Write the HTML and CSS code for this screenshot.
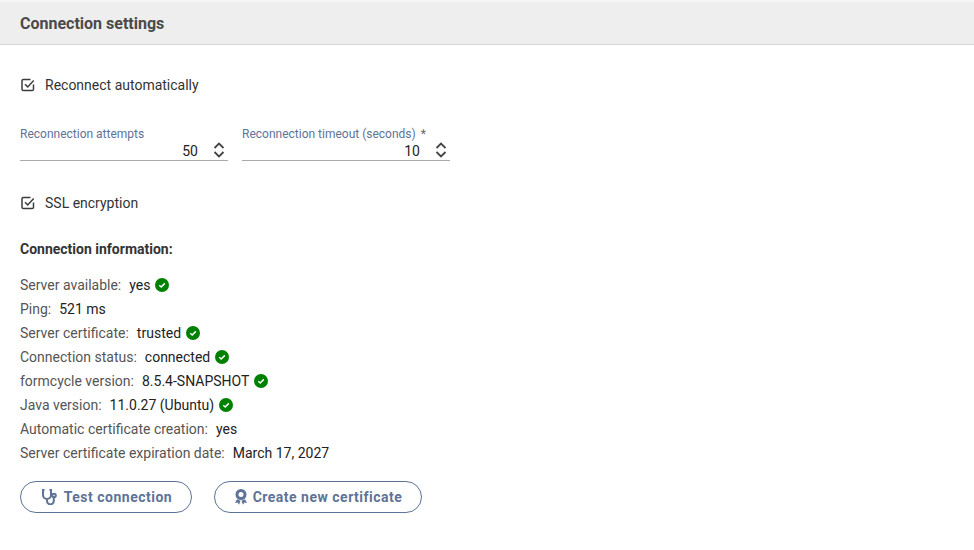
FILE: index.html
```html
<!DOCTYPE html>
<html lang="en">
<head>
<meta charset="UTF-8">
<title>Connection settings</title>
<link rel="stylesheet" href="styles.css">
</head>
<body>
<header class="panel-header">
    <h2>Connection settings</h2>
</header>

<main class="panel-body">
    <label class="check-row check-first">
        <svg class="check-icon" viewBox="0 0 14 14"><path d="M12.500 6.500V11.200a1.300 1.300 0 0 1-1.300 1.300H2.300a1.300 1.300 0 0 1-1.300-1.300V2.800a1.300 1.300 0 0 1 1.300-1.300H9.500"/><path d="M4 6.200l2.700 2.700 6-6.400"/></svg>
        <span>Reconnect automatically</span>
    </label>

    <div class="fields">
        <div class="field">
            <div class="field-label">Reconnection attempts</div>
            <div class="field-input">
                <span class="field-value">50</span>
                <svg class="spinner" viewBox="0 0 12 16"><path d="M1.500 6l4.500-4.500L10.500 6"/><path d="M1.500 10l4.500 4.500L10.500 10"/></svg>
            </div>
        </div>
        <div class="field">
            <div class="field-label">Reconnection timeout (seconds) <span class="req">*</span></div>
            <div class="field-input">
                <span class="field-value">10</span>
                <svg class="spinner" viewBox="0 0 12 16"><path d="M1.500 6l4.500-4.500L10.500 6"/><path d="M1.500 10l4.500 4.500L10.500 10"/></svg>
            </div>
        </div>
    </div>

    <label class="check-row check-ssl">
        <svg class="check-icon" viewBox="0 0 14 14"><path d="M12.500 6.500V11.200a1.300 1.300 0 0 1-1.300 1.300H2.300a1.300 1.300 0 0 1-1.300-1.300V2.800a1.300 1.300 0 0 1 1.300-1.300H9.500"/><path d="M4 6.200l2.700 2.700 6-6.400"/></svg>
        <span>SSL encryption</span>
    </label>

    <h3 class="info-title">Connection information:</h3>

    <ul class="info-list">
        <li><span class="info-key">Server available:</span><span>yes</span><svg class="ok" viewBox="0 0 14 14"><circle cx="7" cy="7" r="7"/><path d="M4.300 7.300l1.900 1.700L9.800 5.400"/></svg></li>
        <li><span class="info-key">Ping:</span><span>521 ms</span></li>
        <li><span class="info-key">Server certificate:</span><span>trusted</span><svg class="ok" viewBox="0 0 14 14"><circle cx="7" cy="7" r="7"/><path d="M4.300 7.300l1.900 1.700L9.800 5.400"/></svg></li>
        <li><span class="info-key">Connection status:</span><span>connected</span><svg class="ok" viewBox="0 0 14 14"><circle cx="7" cy="7" r="7"/><path d="M4.300 7.300l1.900 1.700L9.800 5.400"/></svg></li>
        <li><span class="info-key">formcycle version:</span><span>8.5.4-SNAPSHOT</span><svg class="ok" viewBox="0 0 14 14"><circle cx="7" cy="7" r="7"/><path d="M4.300 7.300l1.900 1.700L9.800 5.400"/></svg></li>
        <li><span class="info-key">Java version:</span><span>11.0.27 (Ubuntu)</span><svg class="ok" viewBox="0 0 14 14"><circle cx="7" cy="7" r="7"/><path d="M4.300 7.300l1.900 1.700L9.800 5.400"/></svg></li>
        <li><span class="info-key">Automatic certificate creation:</span><span>yes</span></li>
        <li><span class="info-key">Server certificate expiration date:</span><span>March 17, 2027</span></li>
    </ul>

    <div class="actions">
        <button class="btn btn-test">
            <svg class="icon-test" viewBox="0 0 18 16"><path d="M3.500 1H2V6a4 4 0 0 0 8 0V1H8.500"/><path d="M6 10.500V12a3.200 3.200 0 0 0 6.800 0V9"/><circle cx="13" cy="6.500" r="1.800"/></svg>
            Test connection
        </button>
        <button class="btn btn-cert">
            <svg class="icon-cert" viewBox="0 0 14 16"><circle cx="7" cy="5.500" r="4"/><path class="ribbon" d="M3 10.200L1 14l2.600-.5L5 15.800l1.500-4zM11 10.200L13 14l-2.600-.5L9 15.800l-1.500-4z"/></svg>
            Create new certificate
        </button>
    </div>
</main>
</body>
</html>
```

FILE: styles.css
```css
body {
    font-family: Roboto, 'Liberation Sans', sans-serif;
    font-size: 14px;
    margin: 0;
    padding: 0;
    background: #fff;
    color: #333;
}
.panel-header {
    height: 45px;
    box-sizing: border-box;
    background: #eee;
    border-top: 2px solid #f6f6f6;
    border-bottom: 1px solid #d6d6d6;
    padding: 0 20px;
    display: flex;
    align-items: center;
}
.panel-header h2 {
    margin: 0;
    font-size: 16px;
    font-weight: 700;
    color: #4a4a4a;
}
.panel-body {
    padding: 0 20px;
}
.check-row {
    display: flex;
    align-items: center;
    gap: 10px;
    height: 20px;
}
.check-first {
    margin-top: 30px;
}
.check-ssl {
    margin-top: 32px;
}
.check-icon {
    width: 14px;
    height: 14px;
    margin-left: 1px;
    fill: none;
    stroke: #3c3c3c;
    stroke-width: 1.500;
}
.fields {
    display: flex;
    gap: 14px;
    margin-top: 32px;
}
.field {
    width: 208px;
}
.field-label {
    font-size: 12px;
    line-height: 14px;
    color: #5e7397;
}
.req {
    color: #666;
    margin-left: 2px;
}
.field-input {
    display: flex;
    align-items: center;
    justify-content: flex-end;
    height: 19px;
    padding-right: 3px;
    border-bottom: 1px solid #aaa;
    color: #222;
}
.field-value {
    margin-right: 15px;
}
.spinner {
    width: 12px;
    height: 16px;
    margin-bottom: 2px;
    fill: none;
    stroke: #444;
    stroke-width: 1.800;
}
.info-title {
    margin: 26px 0 0;
    font-size: 14px;
    line-height: 20px;
    font-weight: 700;
    color: #333;
}
.info-list {
    list-style: none;
    margin: 14px 0 0;
    padding: 0;
}
.info-list li {
    display: flex;
    align-items: center;
    height: 24px;
    color: #222;
}
.info-key {
    color: #555;
    margin-right: 8px;
}
.ok {
    width: 14px;
    height: 14px;
    margin-left: 5px;
}
.ok circle {
    fill: #008000;
}
.ok path {
    fill: none;
    stroke: #fff;
    stroke-width: 1.500;
}
.actions {
    display: flex;
    gap: 22px;
    margin-top: 16px;
}
.btn {
    display: flex;
    align-items: center;
    justify-content: center;
    gap: 5px;
    height: 32px;
    border: 1px solid #5e7397;
    border-radius: 16px;
    background: #fff;
    color: #5e7397;
    font-family: inherit;
    font-size: 14px;
    font-weight: 700;
    letter-spacing: 0.5px;
    padding: 0;
}
.btn-test {
    width: 172px;
    padding-left: 1px;
}
.btn-cert {
    width: 208px;
}
.icon-test {
    width: 18px;
    height: 16px;
    fill: none;
    stroke: #5e7397;
    stroke-width: 2;
}
.icon-cert {
    width: 14px;
    height: 16px;
    fill: none;
    stroke: #5e7397;
    stroke-width: 3;
}
.icon-cert .ribbon {
    fill: #5e7397;
    stroke: none;
}
```
